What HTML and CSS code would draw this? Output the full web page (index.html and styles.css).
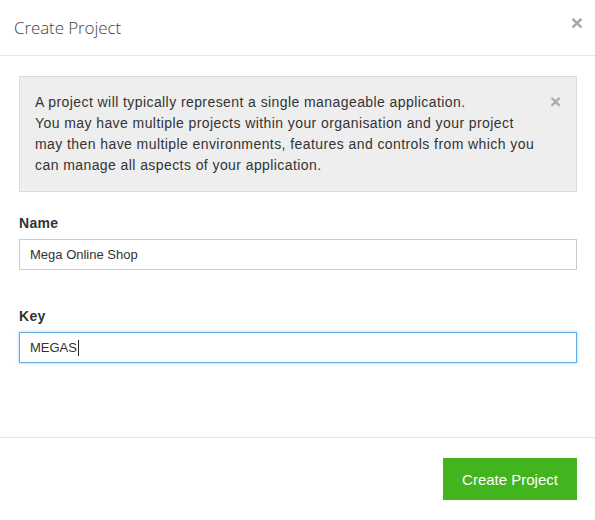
FILE: index.html
```html
<!DOCTYPE html>
<html>
<head>
<meta charset="utf-8">
<link rel="stylesheet" href="styles.css">
</head>
<body>
<div class="modal">
  <div class="modal-header">
    <h4 class="modal-title">Create Project</h4>
    <span class="close">&times;</span>
  </div>
  <div class="modal-body">
    <div class="alert">
      <span class="alert-close">&times;</span>
      A project will typically represent a single manageable application.<br>
      You may have multiple projects within your organisation and your project may then have multiple environments, features and controls from which you can manage all aspects of your application.
    </div>
    <div class="field">
      <label class="label">Name</label>
      <div class="input">Mega Online Shop</div>
    </div>
    <div class="field field-key">
      <label class="label">Key</label>
      <div class="input input-focus">MEGAS<span class="caret"></span></div>
    </div>
  </div>
  <div class="modal-footer">
    <button class="btn">Create Project</button>
  </div>
</div>
</body>
</html>
```
FILE: styles.css
```css
html, body {
  margin: 0;
  padding: 0;
  background: #fff;
}
body {
  font-family: "Liberation Sans", Arial, sans-serif;
  color: #333;
}
.modal {
  width: 595px;
}
.modal-header {
  height: 55px;
  border-bottom: 1px solid #e5e5e5;
  display: flex;
  align-items: center;
  justify-content: space-between;
  padding: 0 14px;
  box-sizing: content-box;
}
.modal-title {
  margin: 0;
  font-family: "Open Sans", sans-serif;
  font-weight: 300;
  font-size: 17px;
  color: #444;
  letter-spacing: -0.1px;
}
.close {
  font-family: "Liberation Sans", Arial, sans-serif;
  font-weight: bold;
  font-size: 21px;
  color: #a5a5a5;
  line-height: 1;
  margin-top: -10px;
  margin-right: -2px;
}
.modal-body {
  height: 340px;
  padding: 20px 18px 21px 19px;
}
.alert {
  position: relative;
  background: #eeeeee;
  border: 1px solid #dcdcdc;
  padding: 15px 36px 15px 15px;
  font-size: 14px;
  line-height: 21px;
  letter-spacing: 0.42px;
  color: #333;
}
.alert-close {
  position: absolute;
  right: 15px;
  top: 15px;
  font-weight: bold;
  font-size: 19px;
  line-height: 1;
  letter-spacing: 0;
  color: #a9a9a9;
}
.field {
  margin-top: 21px;
}
.field-key {
  margin-top: 36px;
}
.label {
  display: block;
  font-weight: bold;
  font-size: 14px;
  line-height: 20px;
  letter-spacing: 0.3px;
  color: #333;
  margin-bottom: 6px;
}
.input {
  height: 31px;
  box-sizing: border-box;
  border: 1px solid #cccccc;
  padding: 0 10px;
  font-size: 13px;
  line-height: 29px;
  color: #333;
  display: flex;
  align-items: center;
}
.input-focus {
  border-color: #66afe9;
  box-shadow: 0 0 3px rgba(102, 175, 233, 0.6);
}
.caret {
  display: inline-block;
  width: 1px;
  height: 16px;
  background: #222;
  margin-left: 1px;
}
.modal-footer {
  border-top: 1px solid #e5e5e5;
  display: flex;
  justify-content: flex-end;
  padding: 20px 18px 20px 0;
}
.btn {
  width: 134px;
  height: 42px;
  background: #42b41e;
  border: none;
  color: #fff;
  font-family: "Liberation Sans", Arial, sans-serif;
  font-size: 15px;
  padding: 0;
}
```
